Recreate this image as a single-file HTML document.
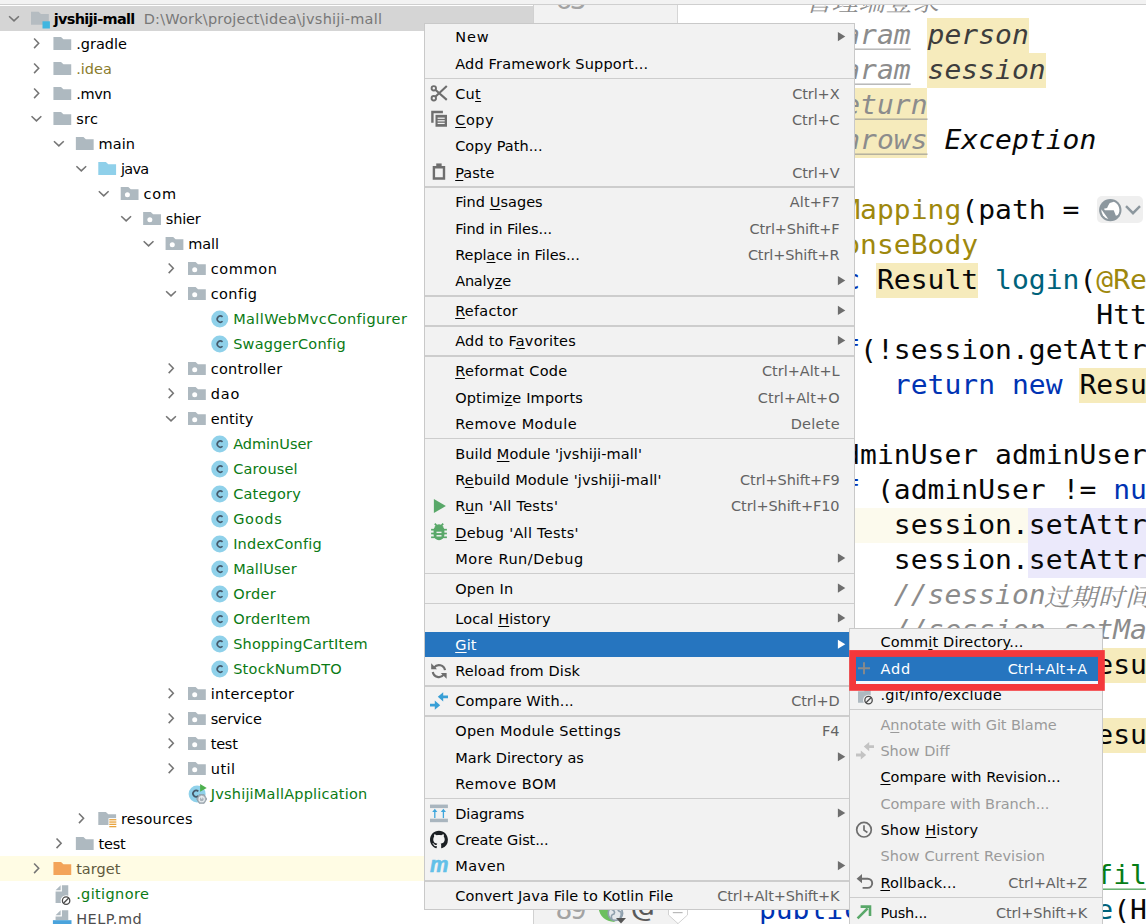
<!DOCTYPE html><html><head><meta charset="utf-8"><title>IDE</title><style>
html,body{margin:0;padding:0}
body{width:1146px;height:924px;position:relative;overflow:hidden;background:#fff;font-family:"DejaVu Sans", "Liberation Sans", sans-serif;font-size:14.5px}
.abs{position:absolute}
.t{position:absolute;white-space:pre;line-height:25px;height:25px}
.t u{text-decoration:underline;text-decoration-thickness:1.2px;text-underline-offset:2.2px}
.code{position:absolute;white-space:pre;font-family:"DejaVu Sans Mono", "Liberation Mono", monospace;font-size:28px;letter-spacing:0.014px;line-height:35px;height:35px;color:#080808;transform:scaleY(0.93);transform-origin:0 27.2px}
.code i{font-style:oblique}
.cj{font-family:"Liberation Serif","Noto Serif CJK SC","Noto Sans CJK SC",serif;font-size:26.5px;letter-spacing:0.5px;font-style:italic;position:relative;top:1.5px;line-height:0;margin-left:-2px}
svg{position:absolute;left:0;top:0;overflow:visible}

</style></head><body>
<div class="abs" style="left:0;top:5.8px;width:533px;height:24.8px;background:#d5d5d5"></div>
<div class="abs" style="left:0;top:855.7px;width:533px;height:25px;background:#fffce4"></div>
<div class="abs" style="left:533px;top:0;width:1px;height:924px;background:#d1d1d1"></div>
<span id="L1" class="t" style="top:7.10px;color:#000;left:53.70px;letter-spacing:-0.691px;font-weight:bold;">jvshiji-mall</span>
<span id="L2" class="t" style="top:7.10px;color:#787878;left:143.70px;letter-spacing:0.213px;">D:\Work\project\idea\jvshiji-mall</span>
<span id="L3" class="t" style="top:32.10px;color:#000;left:76.13px;">.gradle</span>
<span id="L4" class="t" style="top:57.10px;color:#8a7c2c;left:76.13px;letter-spacing:0.025px;">.idea</span>
<span id="L5" class="t" style="top:82.10px;color:#000;left:76.13px;letter-spacing:-0.300px;">.mvn</span>
<span id="L6" class="t" style="top:107.10px;color:#000;left:76.13px;letter-spacing:0.300px;">src</span>
<span id="L7" class="t" style="top:132.10px;color:#000;left:98.56px;letter-spacing:0.067px;">main</span>
<span id="L8" class="t" style="top:157.10px;color:#000;left:120.99px;letter-spacing:-0.733px;">java</span>
<span id="L9" class="t" style="top:182.10px;color:#000;left:143.42px;letter-spacing:0.900px;">com</span>
<span id="L10" class="t" style="top:207.10px;color:#000;left:165.85px;letter-spacing:-0.200px;">shier</span>
<span id="L11" class="t" style="top:232.10px;color:#000;left:188.28px;letter-spacing:-0.133px;">mall</span>
<span id="L12" class="t" style="top:257.10px;color:#000;left:210.71px;letter-spacing:0.620px;">common</span>
<span id="L13" class="t" style="top:282.10px;color:#000;left:210.71px;letter-spacing:0.400px;">config</span>
<span id="L14" class="t" style="top:307.10px;color:#0a7a14;left:233.14px;letter-spacing:0.389px;">MallWebMvcConfigurer</span>
<span id="L15" class="t" style="top:332.10px;color:#0a7a14;left:233.14px;letter-spacing:0.225px;">SwaggerConfig</span>
<span id="L16" class="t" style="top:357.10px;color:#000;left:210.71px;letter-spacing:0.256px;">controller</span>
<span id="L17" class="t" style="top:382.10px;color:#000;left:210.71px;letter-spacing:0.900px;">dao</span>
<span id="L18" class="t" style="top:407.10px;color:#000;left:210.71px;letter-spacing:0.120px;">entity</span>
<span id="L19" class="t" style="top:432.10px;color:#0a7a14;left:233.14px;letter-spacing:-0.012px;">AdminUser</span>
<span id="L20" class="t" style="top:457.10px;color:#0a7a14;left:233.14px;letter-spacing:0.186px;">Carousel</span>
<span id="L21" class="t" style="top:482.10px;color:#0a7a14;left:233.14px;letter-spacing:0.200px;">Category</span>
<span id="L22" class="t" style="top:507.10px;color:#0a7a14;left:233.14px;letter-spacing:0.725px;">Goods</span>
<span id="L23" class="t" style="top:532.10px;color:#0a7a14;left:233.14px;letter-spacing:0.210px;">IndexConfig</span>
<span id="L24" class="t" style="top:557.10px;color:#0a7a14;left:233.14px;letter-spacing:0.143px;">MallUser</span>
<span id="L25" class="t" style="top:582.10px;color:#0a7a14;left:233.14px;letter-spacing:0.350px;">Order</span>
<span id="L26" class="t" style="top:607.10px;color:#0a7a14;left:233.14px;letter-spacing:0.375px;">OrderItem</span>
<span id="L27" class="t" style="top:632.10px;color:#0a7a14;left:233.14px;letter-spacing:0.187px;">ShoppingCartItem</span>
<span id="L28" class="t" style="top:657.10px;color:#0a7a14;left:233.14px;letter-spacing:0.290px;">StockNumDTO</span>
<span id="L29" class="t" style="top:682.10px;color:#000;left:210.71px;letter-spacing:0.310px;">interceptor</span>
<span id="L30" class="t" style="top:707.10px;color:#000;left:210.71px;letter-spacing:-0.133px;">service</span>
<span id="L31" class="t" style="top:732.10px;color:#000;left:210.71px;letter-spacing:-0.233px;">test</span>
<span id="L32" class="t" style="top:757.10px;color:#000;left:210.71px;letter-spacing:0.500px;">util</span>
<span id="L33" class="t" style="top:782.10px;color:#0a7a14;left:210.71px;letter-spacing:0.210px;">JvshijiMallApplication</span>
<span id="L34" class="t" style="top:807.10px;color:#000;left:120.99px;letter-spacing:0.150px;">resources</span>
<span id="L35" class="t" style="top:832.10px;color:#000;left:98.56px;letter-spacing:-0.200px;">test</span>
<span id="L36" class="t" style="top:857.10px;color:#5f5a3e;left:76.13px;letter-spacing:0.060px;">target</span>
<span id="L37" class="t" style="top:882.10px;color:#0a7a14;left:76.13px;letter-spacing:0.367px;">.gitignore</span>
<span id="L38" class="t" style="top:907.10px;color:#4d4d4d;left:76.13px;letter-spacing:0.517px;">HELP.md</span>
<svg width="1146" height="924" viewBox="0 0 1146 924"><path d="M9.10 16.20 l4.9 4.7 l4.9 -4.7" fill="none" stroke="#757575" stroke-width="1.55"/><g opacity="0.55"><path d="M31.00 11.80 h7.6 l2.4 2.3 h7.8 v10.7 h-17.8 z" fill="#9aa7b0"/></g><rect x="42.50" y="21.30" width="7.4" height="7.2" fill="#40b6e0"/><path d="M34.10 38.50 l4.6 4.8 l-4.6 4.8" fill="none" stroke="#757575" stroke-width="1.55"/><path d="M53.43 37.00 h7.6 l2.4 2.3 h7.8 v10.7 h-17.8 z" fill="#aeb9c0"/><path d="M34.10 63.50 l4.6 4.8 l-4.6 4.8" fill="none" stroke="#757575" stroke-width="1.55"/><path d="M53.43 62.00 h7.6 l2.4 2.3 h7.8 v10.7 h-17.8 z" fill="#aeb9c0"/><path d="M34.10 88.50 l4.6 4.8 l-4.6 4.8" fill="none" stroke="#757575" stroke-width="1.55"/><path d="M53.43 87.00 h7.6 l2.4 2.3 h7.8 v10.7 h-17.8 z" fill="#aeb9c0"/><path d="M31.53 116.20 l4.9 4.7 l4.9 -4.7" fill="none" stroke="#757575" stroke-width="1.55"/><path d="M53.43 112.00 h7.6 l2.4 2.3 h7.8 v10.7 h-17.8 z" fill="#aeb9c0"/><path d="M53.96 141.20 l4.9 4.7 l4.9 -4.7" fill="none" stroke="#757575" stroke-width="1.55"/><path d="M75.86 137.00 h7.6 l2.4 2.3 h7.8 v10.7 h-17.8 z" fill="#aeb9c0"/><path d="M76.39 166.20 l4.9 4.7 l4.9 -4.7" fill="none" stroke="#757575" stroke-width="1.55"/><path d="M98.29 162.00 h7.6 l2.4 2.3 h7.8 v10.7 h-17.8 z" fill="#8fd0ea"/><path d="M98.82 191.20 l4.9 4.7 l4.9 -4.7" fill="none" stroke="#757575" stroke-width="1.55"/><path d="M120.72 187.00 h7.6 l2.4 2.3 h7.8 v10.7 h-17.8 z" fill="#aeb9c0"/><circle cx="127.42" cy="194.80" r="2.5" fill="#fff"/><path d="M121.25 216.20 l4.9 4.7 l4.9 -4.7" fill="none" stroke="#757575" stroke-width="1.55"/><path d="M143.15 212.00 h7.6 l2.4 2.3 h7.8 v10.7 h-17.8 z" fill="#aeb9c0"/><circle cx="149.85" cy="219.80" r="2.5" fill="#fff"/><path d="M143.68 241.20 l4.9 4.7 l4.9 -4.7" fill="none" stroke="#757575" stroke-width="1.55"/><path d="M165.58 237.00 h7.6 l2.4 2.3 h7.8 v10.7 h-17.8 z" fill="#aeb9c0"/><circle cx="172.28" cy="244.80" r="2.5" fill="#fff"/><path d="M168.68 263.50 l4.6 4.8 l-4.6 4.8" fill="none" stroke="#757575" stroke-width="1.55"/><path d="M188.01 262.00 h7.6 l2.4 2.3 h7.8 v10.7 h-17.8 z" fill="#aeb9c0"/><circle cx="194.71" cy="269.80" r="2.5" fill="#fff"/><path d="M166.11 291.20 l4.9 4.7 l4.9 -4.7" fill="none" stroke="#757575" stroke-width="1.55"/><path d="M188.01 287.00 h7.6 l2.4 2.3 h7.8 v10.7 h-17.8 z" fill="#aeb9c0"/><circle cx="194.71" cy="294.80" r="2.5" fill="#fff"/><circle cx="219.74" cy="319.10" r="8.5" fill="#8fd1ea"/><path d="M222.54 316.90 a3.1 3.1 0 1 0 0 4.4" fill="none" stroke="#45596a" stroke-width="1.6"/><circle cx="219.74" cy="344.10" r="8.5" fill="#8fd1ea"/><path d="M222.54 341.90 a3.1 3.1 0 1 0 0 4.4" fill="none" stroke="#45596a" stroke-width="1.6"/><path d="M168.68 363.50 l4.6 4.8 l-4.6 4.8" fill="none" stroke="#757575" stroke-width="1.55"/><path d="M188.01 362.00 h7.6 l2.4 2.3 h7.8 v10.7 h-17.8 z" fill="#aeb9c0"/><circle cx="194.71" cy="369.80" r="2.5" fill="#fff"/><path d="M168.68 388.50 l4.6 4.8 l-4.6 4.8" fill="none" stroke="#757575" stroke-width="1.55"/><path d="M188.01 387.00 h7.6 l2.4 2.3 h7.8 v10.7 h-17.8 z" fill="#aeb9c0"/><circle cx="194.71" cy="394.80" r="2.5" fill="#fff"/><path d="M166.11 416.20 l4.9 4.7 l4.9 -4.7" fill="none" stroke="#757575" stroke-width="1.55"/><path d="M188.01 412.00 h7.6 l2.4 2.3 h7.8 v10.7 h-17.8 z" fill="#aeb9c0"/><circle cx="194.71" cy="419.80" r="2.5" fill="#fff"/><circle cx="219.74" cy="444.10" r="8.5" fill="#8fd1ea"/><path d="M222.54 441.90 a3.1 3.1 0 1 0 0 4.4" fill="none" stroke="#45596a" stroke-width="1.6"/><circle cx="219.74" cy="469.10" r="8.5" fill="#8fd1ea"/><path d="M222.54 466.90 a3.1 3.1 0 1 0 0 4.4" fill="none" stroke="#45596a" stroke-width="1.6"/><circle cx="219.74" cy="494.10" r="8.5" fill="#8fd1ea"/><path d="M222.54 491.90 a3.1 3.1 0 1 0 0 4.4" fill="none" stroke="#45596a" stroke-width="1.6"/><circle cx="219.74" cy="519.10" r="8.5" fill="#8fd1ea"/><path d="M222.54 516.90 a3.1 3.1 0 1 0 0 4.4" fill="none" stroke="#45596a" stroke-width="1.6"/><circle cx="219.74" cy="544.10" r="8.5" fill="#8fd1ea"/><path d="M222.54 541.90 a3.1 3.1 0 1 0 0 4.4" fill="none" stroke="#45596a" stroke-width="1.6"/><circle cx="219.74" cy="569.10" r="8.5" fill="#8fd1ea"/><path d="M222.54 566.90 a3.1 3.1 0 1 0 0 4.4" fill="none" stroke="#45596a" stroke-width="1.6"/><circle cx="219.74" cy="594.10" r="8.5" fill="#8fd1ea"/><path d="M222.54 591.90 a3.1 3.1 0 1 0 0 4.4" fill="none" stroke="#45596a" stroke-width="1.6"/><circle cx="219.74" cy="619.10" r="8.5" fill="#8fd1ea"/><path d="M222.54 616.90 a3.1 3.1 0 1 0 0 4.4" fill="none" stroke="#45596a" stroke-width="1.6"/><circle cx="219.74" cy="644.10" r="8.5" fill="#8fd1ea"/><path d="M222.54 641.90 a3.1 3.1 0 1 0 0 4.4" fill="none" stroke="#45596a" stroke-width="1.6"/><circle cx="219.74" cy="669.10" r="8.5" fill="#8fd1ea"/><path d="M222.54 666.90 a3.1 3.1 0 1 0 0 4.4" fill="none" stroke="#45596a" stroke-width="1.6"/><path d="M168.68 688.50 l4.6 4.8 l-4.6 4.8" fill="none" stroke="#757575" stroke-width="1.55"/><path d="M188.01 687.00 h7.6 l2.4 2.3 h7.8 v10.7 h-17.8 z" fill="#aeb9c0"/><circle cx="194.71" cy="694.80" r="2.5" fill="#fff"/><path d="M168.68 713.50 l4.6 4.8 l-4.6 4.8" fill="none" stroke="#757575" stroke-width="1.55"/><path d="M188.01 712.00 h7.6 l2.4 2.3 h7.8 v10.7 h-17.8 z" fill="#aeb9c0"/><circle cx="194.71" cy="719.80" r="2.5" fill="#fff"/><path d="M168.68 738.50 l4.6 4.8 l-4.6 4.8" fill="none" stroke="#757575" stroke-width="1.55"/><path d="M188.01 737.00 h7.6 l2.4 2.3 h7.8 v10.7 h-17.8 z" fill="#aeb9c0"/><circle cx="194.71" cy="744.80" r="2.5" fill="#fff"/><path d="M168.68 763.50 l4.6 4.8 l-4.6 4.8" fill="none" stroke="#757575" stroke-width="1.55"/><path d="M188.01 762.00 h7.6 l2.4 2.3 h7.8 v10.7 h-17.8 z" fill="#aeb9c0"/><circle cx="194.71" cy="769.80" r="2.5" fill="#fff"/><circle cx="197.11" cy="794.00" r="8.5" fill="#8fd1ea"/><path d="M198.31 791.40 a3.1 3.1 0 1 0 0 4.4" fill="none" stroke="#45596a" stroke-width="1.7"/><path d="M200.11 784.00 l6.6 3.9 l-6.6 3.9z" fill="#4eb04e"/><polygon points="206.71,799.00 204.21,803.33 199.21,803.33 196.71,799.00 199.21,794.67 204.21,794.67" fill="#a9b3bb" stroke="#8b97a0" stroke-width="0.8"/><circle cx="201.71" cy="799.20" r="2.6" fill="none" stroke="#e9edf0" stroke-width="1.1"/><rect x="201.16" y="795.60" width="1.1" height="3.2" fill="#e9edf0"/><path d="M78.96 813.50 l4.6 4.8 l-4.6 4.8" fill="none" stroke="#757575" stroke-width="1.55"/><path d="M98.29 812.00 h7.6 l2.4 2.3 h7.8 v10.7 h-17.8 z" fill="#aeb9c0"/><rect x="108.49" y="818.10" width="8.2" height="9.8" fill="#fff"/><rect x="109.29" y="819.10" width="7" height="1.3" fill="#e8a33d"/><rect x="109.29" y="821.40" width="7" height="1.3" fill="#e8a33d"/><rect x="109.29" y="823.70" width="7" height="1.3" fill="#e8a33d"/><rect x="109.29" y="826.00" width="7" height="1.3" fill="#e8a33d"/><path d="M56.53 838.50 l4.6 4.8 l-4.6 4.8" fill="none" stroke="#757575" stroke-width="1.55"/><path d="M75.86 837.00 h7.6 l2.4 2.3 h7.8 v10.7 h-17.8 z" fill="#aeb9c0"/><path d="M34.10 863.50 l4.6 4.8 l-4.6 4.8" fill="none" stroke="#757575" stroke-width="1.55"/><path d="M53.43 862.00 h7.6 l2.4 2.3 h7.8 v10.7 h-17.8 z" fill="#f3a45a"/><path d="M60.65 885.17 L55.57 890.25 H60.65 z M61.92 885.17 V891.52 H55.57 V902.95 H68.27 V885.17 z" fill="#aeb9c0"/><circle cx="66.11" cy="900.66" r="5.5" fill="#fff"/><circle cx="66.11" cy="900.66" r="3.7" fill="none" stroke="#4a4a4a" stroke-width="1.3"/><path d="M63.51 903.26 l5.2 -5.2" stroke="#4a4a4a" stroke-width="1.3"/><path d="M60.65 910.17 L55.57 915.25 H60.65 z M61.92 910.17 V916.52 H55.57 V920.33 H68.27 V910.17 z" fill="#aeb9c0"/><rect x="52.90" y="920.20" width="18.6" height="8" fill="#4aa3dc"/></svg>
<div class="abs" style="left:534px;top:5.2px;width:143px;height:919px;background:#f2f2f2"></div>
<div class="abs" style="left:677px;top:5.2px;width:1px;height:919px;background:#d6d6d6"></div>
<div class="abs" style="left:678px;top:508.00px;width:468px;height:35px;background:#fcfaed"></div>
<div class="abs" style="left:926.88px;top:18.00px;width:101.82px;height:35px;background:#f6ebbc"></div>
<div class="abs" style="left:926.88px;top:53.00px;width:118.69px;height:35px;background:#f6ebbc"></div>
<div class="abs" style="left:808.79px;top:88.00px;width:118.69px;height:35px;background:#f6ebbc"></div>
<div class="abs" style="left:808.79px;top:123.00px;width:118.69px;height:35px;background:#f6ebbc"></div>
<div class="abs" style="left:876.27px;top:263.00px;width:101.82px;height:35px;background:#f6ebbc"></div>
<div class="abs" style="left:1078.71px;top:368.00px;width:101.82px;height:35px;background:#f6ebbc"></div>
<div class="abs" style="left:1028.10px;top:508.00px;width:203.04px;height:35px;background:#ebe9fb"></div>
<div class="abs" style="left:1028.10px;top:543.00px;width:203.04px;height:35px;background:#ebe9fb"></div>
<div class="abs" style="left:1078.71px;top:648.00px;width:101.82px;height:35px;background:#f6ebbc"></div>
<div class="abs" style="left:1078.71px;top:718.00px;width:101.82px;height:35px;background:#f6ebbc"></div>
<div class="code" style="left:775.75px;top:-18.20px;"><span style="color:#8c8c8c;"><i>* </i></span><span class="cj" style="color:#8c8c8c;margin-left:-5px">管理端登录</span></div>
<div class="code" style="left:775.75px;top:16.80px;"><span style="color:#8c8c8c;"><i>* </i></span><span style="color:#8c8c8c;text-decoration:underline;text-decoration-thickness:1.2px;text-underline-offset:4.5px;"><i>@param</i></span> <span style="color:#3d3d3d;"><i>person</i></span></div>
<div class="code" style="left:775.75px;top:51.80px;"><span style="color:#8c8c8c;"><i>* </i></span><span style="color:#8c8c8c;text-decoration:underline;text-decoration-thickness:1.2px;text-underline-offset:4.5px;"><i>@param</i></span> <span style="color:#3d3d3d;"><i>session</i></span></div>
<div class="code" style="left:775.75px;top:86.80px;"><span style="color:#8c8c8c;"><i>* </i></span><span style="color:#8c8c8c;text-decoration:underline;text-decoration-thickness:1.2px;text-underline-offset:4.5px;"><i>@return</i></span></div>
<div class="code" style="left:775.75px;top:121.80px;"><span style="color:#8c8c8c;"><i>* </i></span><span style="color:#8c8c8c;text-decoration:underline;text-decoration-thickness:1.2px;text-underline-offset:4.5px;"><i>@throws</i></span> <span style="color:#080808;"><i>Exception</i></span></div>
<div class="code" style="left:775.75px;top:156.80px;"><span style="color:#8c8c8c;"><i>*/</i></span></div>
<div class="code" style="left:758.88px;top:191.80px;"><span style="color:#9e880d;">@PostMapping</span>(path = </div>
<div class="code" style="left:758.88px;top:226.80px;"><span style="color:#9e880d;">@ResponseBody</span></div>
<div class="code" style="left:758.88px;top:261.80px;"><span style="color:#0033b3;">public</span> Result <span style="color:#00627a;">login</span>(<span style="color:#9e880d;">@Re</span></div>
<div class="code" style="left:1096.28px;top:296.80px;">Htt</div>
<div class="code" style="left:826.36px;top:331.80px;"><span style="color:#0033b3;">if</span>(!session.getAttr</div>
<div class="code" style="left:893.84px;top:366.80px;"><span style="color:#0033b3;">return new</span> Resu</div>
<div class="code" style="left:826.36px;top:436.80px;">AdminUser adminUser</div>
<div class="code" style="left:826.36px;top:471.80px;"><span style="color:#0033b3;">if</span> (adminUser != <span style="color:#0033b3;">nu</span></div>
<div class="code" style="left:893.84px;top:506.80px;">session.setAttr</div>
<div class="code" style="left:893.84px;top:541.80px;">session.setAttr</div>
<div class="code" style="left:893.84px;top:576.80px;"><span style="color:#8c8c8c;"><i>//session</i></span><span class="cj" style="color:#8c8c8c">过期时间</span></div>
<div class="code" style="left:893.84px;top:611.80px;"><span style="color:#8c8c8c;"><i>//session.setMa</i></span></div>
<div class="code" style="left:893.84px;top:646.80px;"><span style="color:#0033b3;">return new</span> Resu</div>
<div class="code" style="left:893.84px;top:716.80px;"><span style="color:#0033b3;">return new</span> Resu</div>
<div class="code" style="left:758.88px;top:856.80px;"><span style="color:#9e880d;">@PostMapping</span>(<span style="color:#067d17;text-decoration:underline;text-decoration-thickness:1.2px;text-underline-offset:4.5px;">"/user/fil</span></div>
<div class="code" style="left:758.88px;top:891.80px;"><span style="color:#0033b3;">public</span> Result <span style="color:#00627a;">profile</span>(H</div>
<div class="abs" style="left:1096.5px;top:196.3px;width:46.5px;height:26.8px;background:#efefef;border-radius:5px"></div>
<svg width="1146" height="924" viewBox="0 0 1146 924"><g transform="translate(1110.3 210.1)"><circle r="11.2" fill="#8c979e"/><path d="M3.6 -8.4 L-0.6 -7.2 L-2.2 -4.4 L-3.2 -2.2 L-6.4 -1.4 L-5.4 0.2 L3.4 0.2 L5.6 5.6 L7.6 4.9 A9.1 9.1 0 0 0 3.6 -8.4 z" fill="#fff"/><path d="M-9.0 -0.8 L-2.0 8.8 A9.1 9.1 0 0 1 -9.0 -0.8z" fill="#fff"/></g><path d="M1126 206.2 l7 7 l7 -7" fill="none" stroke="#8c979e" stroke-width="2.4"/></svg>
<div class="code" style="left:555.5px;top:-17.80px;color:#a3a3a3;letter-spacing:-2.6px">63</div>
<div class="code" style="left:555.5px;top:892.00px;color:#a3a3a3;letter-spacing:-2.6px">89</div>
<div class="code" style="left:631.5px;top:889.60px;color:#5a5a5a;letter-spacing:0;transform:scale(1.28,0.93);transform-origin:0 27.2px">@</div>
<svg width="1146" height="924" viewBox="0 0 1146 924"><path d="M598.5 908 q2 13 16 14 q3 -8 0 -14z" fill="#6cbf5f"/><circle cx="615.4" cy="913.2" r="7.2" fill="#e4e8eb" stroke="#8fa0ad" stroke-width="1.7"/><path d="M611 909 q5 2 3 5 q-4 1 -2 5 M618 907 q-1 4 3 5 q1 3 -1 6" fill="none" stroke="#8fa0ad" stroke-width="1.6"/><path d="M616 917.9 h10 l-5 5.6z" fill="#555"/><path d="M668.5 905.5 h19 v9.5 l-9.5 8.6 l-9.5 -8.6z" fill="#fff" stroke="#d2d2d2" stroke-width="1"/><path d="M672.8 912.6 h9.8" stroke="#b9b9b9" stroke-width="1.2"/></svg>
<div class="abs" style="left:0;top:0;width:1146px;height:4.3px;background:#f2f2f2"></div>
<div class="abs" style="left:0;top:4.3px;width:1146px;height:0.9px;background:#cfcfcf"></div>
<div class="abs" style="left:424.40px;top:23.30px;width:430.60px;height:886.90px;background:#f2f2f2;border:1px solid #c9c9c9;box-sizing:border-box"></div>
<span id="L39" class="t" style="top:25.40px;color:#000;left:455.20px;letter-spacing:0.900px;">New</span>
<span id="L40" class="t" style="top:51.70px;color:#000;left:455.20px;letter-spacing:0.183px;">Add Framework Support...</span>
<div class="abs" style="left:425.40px;top:77.62px;width:428.60px;height:1.4px;background:#cdcdcd"></div>
<span id="L41" class="t" style="top:81.64px;color:#000;left:455.20px;letter-spacing:0.300px;">Cu<u>t</u></span>
<span id="L42" class="t" style="top:81.64px;color:#636363;right:306.50px;letter-spacing:-0.100px;">Ctrl+X</span>
<span id="L43" class="t" style="top:107.94px;color:#000;left:455.20px;letter-spacing:0.567px;"><u>C</u>opy</span>
<span id="L44" class="t" style="top:107.94px;color:#636363;right:306.50px;letter-spacing:-0.100px;">Ctrl+C</span>
<span id="L45" class="t" style="top:134.24px;color:#000;left:455.20px;letter-spacing:0.027px;">Copy Path...</span>
<span id="L46" class="t" style="top:160.54px;color:#000;left:455.20px;"><u>P</u>aste</span>
<span id="L47" class="t" style="top:160.54px;color:#636363;right:306.50px;letter-spacing:-0.100px;">Ctrl+V</span>
<div class="abs" style="left:425.40px;top:186.46px;width:428.60px;height:1.4px;background:#cdcdcd"></div>
<span id="L48" class="t" style="top:190.48px;color:#000;left:455.20px;letter-spacing:0.040px;">Find <u>U</u>sages</span>
<span id="L49" class="t" style="top:190.48px;color:#636363;right:306.32px;letter-spacing:0.080px;">Alt+F7</span>
<span id="L50" class="t" style="top:216.78px;color:#000;left:455.20px;letter-spacing:-0.053px;">Find in Files...</span>
<span id="L51" class="t" style="top:216.78px;color:#636363;right:306.52px;letter-spacing:-0.118px;">Ctrl+Shift+F</span>
<span id="L52" class="t" style="top:243.08px;color:#000;left:455.20px;letter-spacing:-0.050px;">Repl<u>a</u>ce in Files...</span>
<span id="L53" class="t" style="top:243.08px;color:#636363;right:306.53px;letter-spacing:-0.127px;">Ctrl+Shift+R</span>
<span id="L54" class="t" style="top:269.38px;color:#000;left:455.20px;letter-spacing:-0.217px;">Analy<u>z</u>e</span>
<div class="abs" style="left:425.40px;top:295.30px;width:428.60px;height:1.4px;background:#cdcdcd"></div>
<span id="L55" class="t" style="top:299.32px;color:#000;left:455.20px;letter-spacing:0.214px;"><u>R</u>efactor</span>
<div class="abs" style="left:425.40px;top:325.24px;width:428.60px;height:1.4px;background:#cdcdcd"></div>
<span id="L56" class="t" style="top:329.26px;color:#000;left:455.20px;letter-spacing:0.213px;">Add to F<u>a</u>vorites</span>
<div class="abs" style="left:425.40px;top:355.18px;width:428.60px;height:1.4px;background:#cdcdcd"></div>
<span id="L57" class="t" style="top:359.20px;color:#000;left:455.20px;letter-spacing:0.300px;"><u>R</u>eformat Code</span>
<span id="L58" class="t" style="top:359.20px;color:#636363;right:306.42px;letter-spacing:-0.022px;">Ctrl+Alt+L</span>
<span id="L59" class="t" style="top:385.50px;color:#000;left:455.20px;letter-spacing:0.153px;">Optimi<u>z</u>e Imports</span>
<span id="L60" class="t" style="top:385.50px;color:#636363;right:306.33px;letter-spacing:0.067px;">Ctrl+Alt+O</span>
<span id="L61" class="t" style="top:411.80px;color:#000;left:455.20px;letter-spacing:0.433px;">Remove Module</span>
<span id="L62" class="t" style="top:411.80px;color:#636363;right:306.14px;letter-spacing:0.260px;">Delete</span>
<div class="abs" style="left:425.40px;top:437.72px;width:428.60px;height:1.4px;background:#cdcdcd"></div>
<span id="L63" class="t" style="top:441.74px;color:#000;left:455.20px;letter-spacing:0.104px;">Build <u>M</u>odule 'jvshiji-mall'</span>
<span id="L64" class="t" style="top:468.04px;color:#000;left:455.20px;letter-spacing:0.168px;">R<u>e</u>build Module 'jvshiji-mall'</span>
<span id="L65" class="t" style="top:468.04px;color:#636363;right:306.48px;letter-spacing:-0.083px;">Ctrl+Shift+F9</span>
<span id="L66" class="t" style="top:494.34px;color:#000;left:455.20px;letter-spacing:0.257px;">R<u>u</u>n 'All Tests'</span>
<span id="L67" class="t" style="top:494.34px;color:#636363;right:306.50px;letter-spacing:-0.100px;">Ctrl+Shift+F10</span>
<span id="L68" class="t" style="top:520.64px;color:#000;left:455.20px;letter-spacing:0.275px;"><u>D</u>ebug 'All Tests'</span>
<span id="L69" class="t" style="top:546.94px;color:#000;left:455.20px;letter-spacing:0.538px;">More Run/Debug</span>
<div class="abs" style="left:425.40px;top:572.86px;width:428.60px;height:1.4px;background:#cdcdcd"></div>
<span id="L70" class="t" style="top:576.88px;color:#000;left:455.20px;letter-spacing:0.183px;">Open In</span>
<div class="abs" style="left:425.40px;top:602.80px;width:428.60px;height:1.4px;background:#cdcdcd"></div>
<span id="L71" class="t" style="top:606.82px;color:#000;left:455.20px;letter-spacing:0.125px;">Local <u>H</u>istory</span>
<div class="abs" style="left:425.40px;top:632.37px;width:428.60px;height:24.4px;background:#2675bf"></div>
<span id="L72" class="t" style="top:633.12px;color:#fff;left:455.20px;letter-spacing:0.200px;"><u>G</u>it</span>
<span id="L73" class="t" style="top:659.42px;color:#000;left:455.20px;letter-spacing:0.087px;">Reload from Disk</span>
<div class="abs" style="left:425.40px;top:685.34px;width:428.60px;height:1.4px;background:#cdcdcd"></div>
<span id="L74" class="t" style="top:689.36px;color:#000;left:455.20px;letter-spacing:0.100px;">Compare With...</span>
<span id="L75" class="t" style="top:689.36px;color:#636363;right:306.54px;letter-spacing:-0.140px;">Ctrl+D</span>
<div class="abs" style="left:425.40px;top:715.28px;width:428.60px;height:1.4px;background:#cdcdcd"></div>
<span id="L76" class="t" style="top:719.30px;color:#000;left:455.20px;letter-spacing:0.284px;">Open Module Settings</span>
<span id="L77" class="t" style="top:719.30px;color:#636363;right:306.30px;letter-spacing:0.100px;">F4</span>
<span id="L78" class="t" style="top:745.60px;color:#000;left:455.20px;letter-spacing:0.031px;">Mark Directory as</span>
<span id="L79" class="t" style="top:771.90px;color:#000;left:455.20px;letter-spacing:0.456px;">Remove BOM</span>
<div class="abs" style="left:425.40px;top:797.82px;width:428.60px;height:1.4px;background:#cdcdcd"></div>
<span id="L80" class="t" style="top:801.84px;color:#000;left:455.20px;letter-spacing:-0.114px;">Diagrams</span>
<span id="L81" class="t" style="top:828.14px;color:#000;left:455.20px;letter-spacing:-0.123px;">Create Gist...</span>
<span id="L82" class="t" style="top:854.44px;color:#000;left:455.20px;letter-spacing:0.500px;">Maven</span>
<span class="abs" style="left:429.5px;top:852.34px;font-family:'Liberation Sans',sans-serif;font-weight:bold;font-style:italic;font-size:22.5px;line-height:25px;color:#62c0e8;-webkit-text-stroke:0.6px #62c0e8;transform:scaleX(0.92);transform-origin:0 0">m</span>
<div class="abs" style="left:425.40px;top:880.36px;width:428.60px;height:1.4px;background:#cdcdcd"></div>
<span id="L83" class="t" style="top:884.38px;color:#000;left:455.20px;letter-spacing:0.103px;">Convert Java File to Kotlin File</span>
<span id="L84" class="t" style="top:884.38px;color:#636363;right:306.53px;letter-spacing:-0.127px;">Ctrl+Alt+Shift+K</span>
<svg width="1146" height="924" viewBox="0 0 1146 924"><path d="M837.90 31.95 l7.4 4.6 l-7.4 4.6z" fill="#6e6e6e"/><g fill="none" stroke="#6e6e6e" stroke-width="1.9"><circle cx="433.80" cy="88.34" r="2.2"/><circle cx="433.80" cy="98.24" r="2.2"/></g><path d="M435.60 89.99 L446.80 99.89 M435.60 96.59 L446.80 86.09" stroke="#6e6e6e" stroke-width="2.1" fill="none"/><path d="M431.20 110.74 h11.7 v2.4 h-9.3 v9.5 h-2.4z" fill="#6e6e6e"/><rect x="435.50" y="114.84" width="11.5" height="11.9" fill="#6e6e6e"/><rect x="437.60" y="117.59" width="7.1" height="1.25" fill="#f2f2f2"/><rect x="437.60" y="120.19" width="7.1" height="1.25" fill="#f2f2f2"/><rect x="437.60" y="122.79" width="7.1" height="1.25" fill="#f2f2f2"/><path d="M432.70 166.04 h12.5 v13.7 h-12.5z M435.10 168.44 v8.9 h7.7 v-8.9z" fill="#6e6e6e" fill-rule="evenodd"/><path d="M436.25 163.44 h5.4 v2.7 h-5.4z" fill="#6e6e6e"/><path d="M837.90 275.93 l7.4 4.6 l-7.4 4.6z" fill="#6e6e6e"/><path d="M837.90 305.87 l7.4 4.6 l-7.4 4.6z" fill="#6e6e6e"/><path d="M837.90 335.81 l7.4 4.6 l-7.4 4.6z" fill="#6e6e6e"/><path d="M433.90 498.89 l12 7.1 l-12 7.1z" fill="#59a869"/><path d="M433.60 531.29 a5.4 7 0 0 1 10.8 0 v3.5 a5.4 5.4 0 0 1 -10.8 0z" fill="#59a869"/><path d="M434.80 523.69 l2.6 2.8 M443.20 523.69 l-2.6 2.8" stroke="#59a869" stroke-width="1.8" fill="none"/><path d="M431.10 529.69 h15.8" stroke="#59a869" stroke-width="1.7"/><path d="M431.10 533.49 h15.8" stroke="#59a869" stroke-width="1.7"/><path d="M431.10 537.29 h15.8" stroke="#59a869" stroke-width="1.7"/><rect x="436.50" y="531.69" width="5" height="1.4" fill="#f2f2f2"/><rect x="436.50" y="535.09" width="5" height="1.4" fill="#f2f2f2"/><path d="M837.90 553.49 l7.4 4.6 l-7.4 4.6z" fill="#6e6e6e"/><path d="M837.90 583.43 l7.4 4.6 l-7.4 4.6z" fill="#6e6e6e"/><path d="M837.90 613.37 l7.4 4.6 l-7.4 4.6z" fill="#6e6e6e"/><path d="M837.90 639.67 l7.4 4.6 l-7.4 4.6z" fill="#fff"/><g transform="translate(438.90 0) scale(-1 1) translate(-438.90 0)"><g fill="none" stroke="#6e6e6e" stroke-width="2.2"><path d="M432.80 670.17 a6.1 6.1 0 0 1 10.9 -2.6"/><path d="M445.00 671.97 a6.1 6.1 0 0 1 -10.9 2.6"/></g><path d="M446.60 663.37 v5.8 h-5.8z" fill="#6e6e6e"/><path d="M431.20 678.77 v-5.8 h5.8z" fill="#6e6e6e"/></g><g fill="#389fd6"><path d="M437.80 696.81 l5.4 -4.6 v3.2 h4.8 v2.8 h-4.8 v3.2z"/><path d="M440.20 705.21 l-5.4 4.6 v-3.2 h-4.8 v-2.8 h4.8 v-3.2z"/></g><path d="M837.90 752.15 l7.4 4.6 l-7.4 4.6z" fill="#6e6e6e"/><rect x="430.00" y="804.59" width="17.9" height="3.5" fill="#a9b5be"/><rect x="430.00" y="818.69" width="17.9" height="3.5" fill="#a9b5be"/><path d="M434.80 818.09 v-6.5" stroke="#3ea6dc" stroke-width="1.3"/><path d="M432.20 812.09 l2.6 -3.4 l2.6 3.4z" fill="#3ea6dc"/><path d="M443.40 818.09 v-6.5" stroke="#3ea6dc" stroke-width="1.3"/><path d="M440.80 812.09 l2.6 -3.4 l2.6 3.4z" fill="#3ea6dc"/><path d="M837.90 808.39 l7.4 4.6 l-7.4 4.6z" fill="#6e6e6e"/><path transform="translate(430.00 830.69) scale(1.119)" fill="#1b1f23" d="M8 0C3.58 0 0 3.58 0 8c0 3.54 2.29 6.53 5.47 7.59.4.07.55-.17.55-.38 0-.19-.01-.82-.01-1.49-2.01.37-2.53-.49-2.69-.94-.09-.23-.48-.94-.82-1.13-.28-.15-.68-.52-.01-.53.63-.01 1.08.58 1.23.82.72 1.21 1.87.87 2.33.66.07-.52.28-.87.51-1.07-1.78-.2-3.64-.89-3.64-3.95 0-.87.31-1.59.82-2.15-.08-.2-.36-1.02.08-2.12 0 0 .67-.21 2.2.82.64-.18 1.32-.27 2-.27.68 0 1.36.09 2 .27 1.53-1.04 2.2-.82 2.2-.82.44 1.1.16 1.92.08 2.12.51.56.82 1.27.82 2.15 0 3.07-1.87 3.75-3.65 3.95.29.25.54.73.54 1.48 0 1.07-.01 1.93-.01 2.2 0 .21.15.46.55.38A8.013 8.013 0 0016 8c0-4.42-3.58-8-8-8z"/><path d="M837.90 860.99 l7.4 4.6 l-7.4 4.6z" fill="#6e6e6e"/></svg>
<div class="abs" style="left:849.00px;top:628.10px;width:253.60px;height:320px;background:#f2f2f2;border:1px solid #c9c9c9;box-sizing:border-box"></div>
<span id="L85" class="t" style="top:630.30px;color:#000;left:880.40px;letter-spacing:0.156px;">Comm<u>i</u>t Directory...</span>
<div class="abs" style="left:850.00px;top:655.70px;width:251.60px;height:25.4px;background:#2675bf"></div>
<div class="abs" style="left:850.00px;top:681.10px;width:251.60px;height:3.6px;background:#f3f8fd"></div>
<span id="L86" class="t" style="top:656.60px;color:#fff;left:880.40px;letter-spacing:0.900px;">Add</span>
<span id="L87" class="t" style="top:656.60px;color:#fff;right:58.81px;letter-spacing:-0.011px;">Ctrl+Alt+A</span>
<span id="L88" class="t" style="top:682.90px;color:#000;left:880.40px;letter-spacing:0.275px;">.git/info/exclude</span>
<div class="abs" style="left:850.00px;top:708.82px;width:251.60px;height:1.4px;background:#cdcdcd"></div>
<span id="L89" class="t" style="top:712.84px;color:#9a9a9a;left:880.40px;letter-spacing:-0.073px;">A<u>n</u>notate with Git Blame</span>
<span id="L90" class="t" style="top:739.14px;color:#9a9a9a;left:880.40px;letter-spacing:0.012px;">Show Diff</span>
<span id="L91" class="t" style="top:765.44px;color:#000;left:880.40px;"><u>C</u>ompare with Revision...</span>
<span id="L92" class="t" style="top:791.74px;color:#9a9a9a;left:880.40px;letter-spacing:-0.086px;">Compare with Branch...</span>
<span id="L93" class="t" style="top:818.04px;color:#000;left:880.40px;letter-spacing:0.218px;">Show <u>H</u>istory</span>
<span id="L94" class="t" style="top:844.34px;color:#9a9a9a;left:880.40px;letter-spacing:0.060px;">Show Current Revision</span>
<span id="L95" class="t" style="top:870.64px;color:#000;left:880.40px;letter-spacing:0.140px;"><u>R</u>ollback...</span>
<span id="L96" class="t" style="top:870.64px;color:#636363;right:58.88px;letter-spacing:-0.078px;">Ctrl+Alt+Z</span>
<div class="abs" style="left:850.00px;top:896.56px;width:251.60px;height:1.4px;background:#cdcdcd"></div>
<span id="L97" class="t" style="top:900.58px;color:#000;left:880.40px;letter-spacing:-0.200px;">Push...</span>
<span id="L98" class="t" style="top:900.58px;color:#636363;right:58.92px;letter-spacing:-0.118px;">Ctrl+Shift+K</span>
<svg width="1146" height="924" viewBox="0 0 1146 924"><path d="M858.00 668.25 h12 M864.00 662.25 v12" stroke="#8a8a8a" stroke-width="1.9"/><path d="M863.09 684.92 L858.01 690.00 H863.09 z M864.36 684.92 V691.27 H858.01 V702.70 H870.71 V684.92 z" fill="#aeb9c0"/><circle cx="868.55" cy="700.16" r="5.5" fill="#f2f2f2"/><circle cx="868.55" cy="700.16" r="3.7" fill="none" stroke="#4a4a4a" stroke-width="1.3"/><path d="M865.95 702.76 l5.2 -5.2" stroke="#4a4a4a" stroke-width="1.3"/><g fill="#c3c3c3"><path d="M863.80 746.59 l5.4 -4.6 v3.2 h4.8 v2.8 h-4.8 v3.2z"/><path d="M866.20 754.99 l-5.4 4.6 v-3.2 h-4.8 v-2.8 h4.8 v-3.2z"/></g><circle cx="864.00" cy="829.69" r="7.3" fill="none" stroke="#6e6e6e" stroke-width="1.7"/><path d="M864.00 825.29 v4.8 l3.4 2.4" fill="none" stroke="#6e6e6e" stroke-width="1.7"/><path d="M860.40 878.69 h7.2 a4.6 4.6 0 0 1 0 9.2 h-5" fill="none" stroke="#6e6e6e" stroke-width="1.9"/><path d="M856.60 878.69 l5.4 -4.6 v9.2z" fill="#6e6e6e"/><path d="M857.60 918.43 L867.60 908.43" stroke="#59a869" stroke-width="2.6"/><path d="M860.60 906.63 h9.4 v9.4" fill="none" stroke="#59a869" stroke-width="2.6"/></svg>
<svg width="1146" height="924" viewBox="0 0 1146 924"><rect x="852.6" y="653.5" width="248.8" height="33.9" fill="none" stroke="#f4383b" stroke-width="6.8"/></svg>
</body></html>
